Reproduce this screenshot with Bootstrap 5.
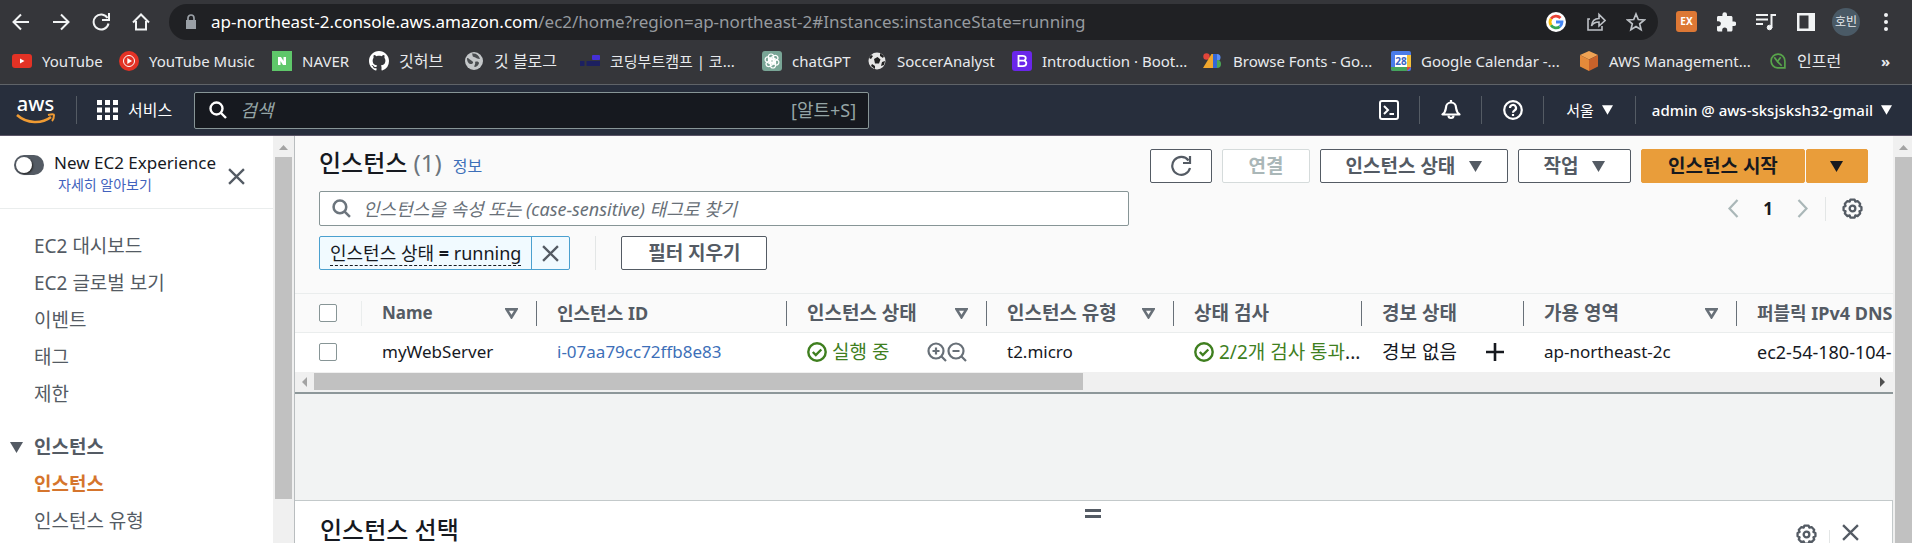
<!DOCTYPE html>
<html lang="ko">
<head>
<meta charset="utf-8">
<meta name="viewport" content="width=device-width, initial-scale=1">
<title>인스턴스 | EC2 관리 콘솔</title>
<link href="https://cdn.jsdelivr.net/npm/bootstrap@5.3.0/dist/css/bootstrap.min.css" rel="stylesheet">
<style>
  :root { --ink: #16191f; --slate: #545b64; --rule: #eaeded; --edge: #879596; --link: #3d6fb8; --ok: #3f7f1f; --aws: #e99d3a; }
  body { font-family: "Noto Sans", "Noto Sans CJK KR", sans-serif; font-size: 18px; line-height: 24px; color: var(--ink); background: #fff; }
  button { background: none; border: 0; padding: 0; color: inherit; }
  svg { display: block; flex: none; }
  a { text-decoration: none; color: var(--link); }
  .ko { font-size: 19px; }
  .en { font-size: 17px; }
  .dim { color: var(--slate); }

  /* browser chrome */
  .chrome { background: #35363a; color: #e8eaed; border-bottom: 1px solid #5f6368; }
  .toolbar { height: 43px; padding: 0 6px 0 1px; }
  .tool { width: 40px; height: 40px; display: flex; align-items: center; justify-content: center; flex: none; }
  .omnibox { background: #202124; border-radius: 18px; height: 36px; margin: 0 8px; padding: 0 12px 0 14px; }
  .omnibox .url { font-size: 17px; color: #fff; }
  .omnibox .url span { color: #969a9f; }
  .avatar { width: 28px; height: 28px; border-radius: 50%; background: #4a5a66; font-size: 12px; display: flex; align-items: center; justify-content: center; }
  .marks { display: grid; height: 41px; padding: 0 0 5px 12px; align-items: center; font-size: 15px;
    grid-template-columns: 107px 153px 97px 95px 116px 182px 106px 144px 191px 188px 188px 190px 1fr 31px; }
  .marks a { display: flex; align-items: center; gap: 10px; color: #e8eaed; white-space: nowrap; }
  .marks .hangul { font-size: 16px; }

  /* console header */
  .topnav { background: #272e3c; color: #fff; height: 51px; border-bottom: 1px solid #5b5567; font-size: 15px; }
  .topnav .vr { width: 1px; height: 28px; align-self: center; background: #545b64; opacity: 1; }
  .topnav .ico { width: 61px; display: flex; justify-content: center; }
  .logo { margin: 0 20px 0 16px; }
  .services { gap: 10px; margin: 0 22px 0 20px; font-size: 16px; }
  .region { padding: 0 22px; }
  .account { padding: 0 20px 0 16px; }
  .topsearch { flex: 0 1 675px; height: 37px; background: #16191f; border: 1px solid #879596; border-radius: 2px; color: #95a5a6; padding: 0 12px 0 14px; font-size: 18px; }
  .topsearch input { background: none; border: 0; outline: 0; font-style: italic; color: #fff; min-width: 0; margin-left: 13px; }
  .topsearch input::placeholder { color: #95a5a6; opacity: 1; }

  /* side navigation */
  .side { width: 273px; }
  .side-top { height: 73px; border-bottom: 1px solid var(--rule); padding: 15px 28px 0 14px; }
  .switcher { appearance: none; width: 30px; height: 20px; border-radius: 10px; background: #545b64; display: flex; margin: 4px 0 0; padding: 2px; }
  .switcher::before { content: ""; width: 16px; height: 16px; border-radius: 50%; background: #fff; box-shadow: 1px 1px 2px #222; }
  .exp { margin-left: 10px; font-size: 17px; }
  .more { font-size: 14px; line-height: 20px; color: #4262bd; margin-left: 4px; }
  .side-close { margin-top: 17px; }
  .side ul { padding: 19px 0 0 34px; margin: 0; line-height: 37px; font-size: 19px; }
  .side li, .side li a { color: var(--slate); }
  .side .group { gap: 11px; margin: 16px 0 0 -24px; }
  .side li a.now { color: #d5752d; }
  .vtrack { background: #f0f0f0; padding: 0 2px; width: 21px; }
  .vtrack svg { height: 21px; margin: 0 auto; }
  .vtrack .thumb { background: #c1c1c1; width: 100%; height: 84%; }
  .vtrack.page { width: 19px; padding-right: 0; }

  /* instance list */
  .main { border-left: 1px solid #b9bdbf; min-width: 0; background: #f2f3f3; }
  .list-head { background: #fafafa; padding: 13px 25px 23px 24px; }
  .title { font-size: 24px; line-height: 28px; font-weight: 500; margin: 0; }
  .info { font-size: 16px; line-height: 34px; margin-left: 11px; }
  .acts { gap: 10px; }
  .pair { gap: 1px; }
  .act { height: 34px; border: 1px solid var(--slate); border-radius: 2px; background: #fff; color: var(--slate); font-weight: 700; font-size: 19px; line-height: 24px; display: flex; align-items: center; justify-content: center; gap: 14px; white-space: nowrap; }
  .act:disabled { border-color: #d5dbdb; color: #aab7b8; }
  .act.go { background: var(--aws); border-color: var(--aws); color: var(--ink); }
  .filter { flex: 0 1 810px; height: 35px; border: 1px solid var(--edge); border-radius: 2px; background: #fff; }
  .filter input { border: 0; outline: 0; font-style: italic; min-width: 0; }
  .filter input::placeholder { color: #687078; opacity: 1; }
  .pager { gap: 24px; padding-right: 5px; }
  .pager .rule { margin: 0 -8px; }
  .filters { margin-top: 10px; }
  .filters > .rule { margin: 0 25px; }
  .token { height: 34px; border: 1px solid #4ba0cf; border-radius: 2px; background: #f1faff; }
  .token span { border-bottom: 1px dashed var(--ink); margin: 0 10px; }
  .token button { width: 38px; border-left: 1px solid #4ba0cf; align-self: stretch; display: flex; align-items: center; justify-content: center; }
  .rule { width: 1px; background: #e3e6e6; }
  .grid-wrap { overflow: hidden; background: #fff; }
  .inst { table-layout: fixed; width: 100%; min-width: 1598px; border-collapse: collapse; white-space: nowrap; }
  .inst th { background: #fafafa; border: solid var(--rule); border-width: 1px 0; height: 39px; padding: 0; color: var(--slate); font-weight: 700; }
  .inst th > div { height: 25px; padding: 0 18px 0 20px; border-right: 1px solid #687078; display: flex; align-items: center; justify-content: space-between; }
  .inst th:first-child > div { border-color: var(--rule); }
  .inst th:last-child > div { border: 0; padding-right: 0; }
  .inst td { height: 39px; padding: 0 0 0 20px; overflow: hidden; }
  .inst th:first-child > div, .inst td:first-child { padding-left: 24px; }
  .tick { appearance: none; width: 18px; height: 18px; border: 1px solid var(--edge); border-radius: 2px; background: #fff; margin: 0; display: block; }
  .good { color: var(--ok); gap: 5px; }
  .trail { margin: 0 20px 0 auto; }
  .htrack { height: 20px; background: #f0f0f0; padding: 2px 6px; display: flex; align-items: center; gap: 5px; }
  .htrack .thumb { height: 17px; width: 48.5%; background: #c1c1c1; }
  .list { border-bottom: 2px solid #8d9799; }
  .split { background: #fff; border: 1px solid #c3c9ca; border-width: 1px 1px 0 0; margin-top: 106px; padding-top: 8px; }
  .split-bar { gap: 12px; padding: 0 33px 0 25px; }
  .split-bar .title { line-height: 24px; }
  .split-bar button { margin-top: 6px; }
  .split-bar .rule { height: 28px; margin-top: 12px; }
  .grip { width: 16px; height: 9px; border: solid var(--slate); border-width: 3px 0; }
</style>
</head>
<body class="vh-100 overflow-hidden d-flex flex-column">

<svg width="0" height="0" class="position-absolute">
  <defs>
    <symbol id="lens" viewBox="0 0 18 18"><g fill="none" stroke="currentColor" stroke-width="2.4"><circle cx="7.5" cy="7.5" r="6"/><path d="M12 12l5 5"/></g></symbol>
    <symbol id="cross" viewBox="0 0 16 16"><path d="M1 1l14 14M15 1L1 15" stroke="currentColor" stroke-width="2.2"/></symbol>
    <symbol id="down" viewBox="0 0 13 11"><path d="M0 0h13L6.500 11z" fill="currentColor"/></symbol>
    <symbol id="sort" viewBox="0 0 12 10"><path d="M1.500 1.200h9L6 8.500z" fill="none" stroke="#687078" stroke-width="2.4"/></symbol>
    <symbol id="okay" viewBox="0 0 20 20"><g fill="none" stroke="currentColor" stroke-width="2.4"><circle cx="10" cy="10" r="8.700"/><path d="M5.800 10l3 3 5.500-5.500"/></g></symbol>
    <symbol id="gear" viewBox="0 0 20 20"><g fill="none" stroke="currentColor" stroke-width="2.2"><path stroke-linejoin="round" d="M8 1.500h4l.7 2 2.100-.600 2.500 2.600-.7 2.100 1.900 1v3l-1.900 1 .7 2.100-2.500 2.600-2.100-.7-.7 2H8l-.7-2-2.100.7-2.500-2.600.7-2.100-1.900-1v-3l1.900-1-.7-2.100 2.500-2.600 2.100.6z"/><circle cx="10" cy="10" r="2.700"/></g></symbol>
  </defs>
</svg>

<header class="chrome">
  <div class="toolbar d-flex align-items-center">
    <button class="tool" aria-label="뒤로"><svg width="18" height="18" fill="none" stroke="#f1f3f4" stroke-width="2"><path d="M17 9H2M9 1.500L1.500 9 9 16.500"/></svg></button>
    <button class="tool" aria-label="앞으로"><svg width="18" height="18" fill="none" stroke="#f1f3f4" stroke-width="2"><path d="M1 9h15M9 1.500L16.500 9 9 16.500"/></svg></button>
    <button class="tool" aria-label="새로고침"><svg width="18" height="18" fill="none" stroke="#f1f3f4" stroke-width="2"><path d="M15.500 5A7.500 7.500 0 1 0 16.500 10.500M17 0v7h-7"/></svg></button>
    <button class="tool" aria-label="홈"><svg width="18" height="18" fill="none" stroke="#f1f3f4" stroke-width="2"><path d="M1 9.500L9 1.500l8 8M4 8v8.500h10V8"/></svg></button>
    <div class="omnibox d-flex align-items-center flex-grow-1">
      <svg width="16" height="16"><path d="M3 6h10v9H3z" fill="#9aa0a6"/><path d="M5 6.500V4a3 3 0 0 1 6 0v2.500" fill="none" stroke="#9aa0a6" stroke-width="1.700"/></svg>
      <div class="url ms-2 ps-1 me-auto text-nowrap">ap-northeast-2.console.aws.amazon.com<span>/ec2/home?region=ap-northeast-2#Instances:instanceState=running</span></div>
      <div class="d-flex align-items-center gap-3">
        <button class="me-1" aria-label="Google"><svg width="20" height="20"><circle cx="10" cy="10" r="10" fill="#fff"/><g fill="none" stroke-width="2.800"><path d="M14.500 6A6 6 0 0 0 5 6.800" stroke="#ea4335"/><path d="M5 6.800a6 6 0 0 0 0 6.400" stroke="#fbbc05"/><path d="M5 13.200a6 6 0 0 0 8.800 1.400" stroke="#34a853"/><path d="M13.800 14.600A6 6 0 0 0 16 10h-6" stroke="#4285f4"/></g></svg></button>
        <button class="me-1" aria-label="공유"><svg width="20" height="20" fill="none" stroke="#bdc1c6" stroke-width="1.600"><path d="M4 7H2v11h14v-4M5.500 14c.5-5 3-7.500 7.500-7.500V2.500L19 8.500l-6 5.500v-4c-4 0-6 1-7.500 4z"/></svg></button>
        <button aria-label="북마크"><svg width="20" height="20" fill="none" stroke="#bdc1c6" stroke-width="1.700"><path d="M10 2l2.300 5.500 6 .5-4.600 3.900 1.400 5.900-5.100-3.200-5.100 3.200 1.400-5.900L1.700 8l6-.5z"/></svg></button>
      </div>
    </div>
    <button class="tool" aria-label="확장 EX"><svg width="21" height="21"><rect width="21" height="21" rx="3" fill="#dd7835"/><text x="10.500" y="14" font-size="10" font-weight="700" fill="#fff" text-anchor="middle">EX</text></svg></button>
    <button class="tool" aria-label="확장 프로그램"><svg width="20" height="20" fill="#f1f3f4"><path d="M18 9.500h-1.500v-4c0-.8-.7-1.500-1.500-1.500h-4V2.500a2.300 2.300 0 0 0-4.600 0V4h-4C1.600 4 1 4.700 1 5.500v3.700h1.400a2.500 2.500 0 0 1 0 5H1V18c0 .8.7 1.500 1.500 1.500h3.700v-1.400a2.500 2.500 0 0 1 5 0v1.400H15c.8 0 1.500-.7 1.500-1.500v-4H18a2.200 2.200 0 0 0 0-4.500z"/></svg></button>
    <button class="tool" aria-label="미디어"><svg width="20" height="18" fill="none" stroke="#f1f3f4" stroke-width="2"><path d="M0 2h12M0 6.500h12M0 11h7M15.500 15V2H20"/><circle cx="13.500" cy="14.500" r="2.300" fill="#f1f3f4" stroke-width="1"/></svg></button>
    <button class="tool" aria-label="측면 패널"><svg width="18" height="18"><path d="M0 0h18v18H0zM2.500 2.500v13h9v-13z" fill="#f1f3f4" fill-rule="evenodd"/></svg></button>
    <button class="tool" aria-label="프로필"><span class="avatar">호빈</span></button>
    <button class="tool" aria-label="메뉴"><svg width="4" height="18" fill="#f1f3f4"><circle cx="2" cy="2" r="2"/><circle cx="2" cy="9" r="2"/><circle cx="2" cy="16" r="2"/></svg></button>
  </div>
  <nav class="marks">
    <a href="#"><svg width="20" height="20"><rect y="3" width="20" height="14" rx="3" fill="#e33225"/><path d="M8 7.500v5l4.500-2.500z" fill="#fff"/></svg>YouTube</a>
    <a href="#"><svg width="20" height="20"><circle cx="10" cy="10" r="10" fill="#e33225"/><circle cx="10" cy="10" r="5.500" fill="none" stroke="#fff"/><path d="M8.300 7v6l4.700-3z" fill="#fff"/></svg>YouTube Music</a>
    <a href="#"><svg width="20" height="20"><rect width="20" height="20" fill="#5fc76a"/><path d="M6 6h3l2.500 4V6H14v8h-3l-2.500-4v4H6z" fill="#fff"/></svg>NAVER</a>
    <a href="#" class="hangul"><svg width="20" height="20" viewBox="0 0 16 16" fill="#fff"><path d="M8 0C3.580 0 0 3.580 0 8c0 3.540 2.290 6.530 5.470 7.590.4.070.55-.17.55-.38 0-.19-.01-.82-.01-1.490-2.010.37-2.530-.49-2.690-.94-.09-.23-.48-.94-.82-1.130-.28-.15-.68-.52-.01-.53.63-.01 1.080.58 1.230.82.72 1.210 1.870.87 2.330.66.07-.52.28-.87.51-1.070-1.780-.2-3.640-.89-3.640-3.950 0-.87.31-1.590.82-2.150-.08-.2-.36-1.020.08-2.120 0 0 .67-.21 2.200.82.64-.18 1.320-.27 2-.27s1.360.09 2 .27c1.530-1.040 2.200-.82 2.200-.82.44 1.100.16 1.920.08 2.120.51.56.82 1.270.82 2.150 0 3.070-1.870 3.750-3.650 3.950.29.25.54.73.54 1.480 0 1.070-.01 1.930-.01 2.200 0 .21.15.46.55.38A8.010 8.010 0 0 0 16 8c0-4.420-3.580-8-8-8z"/></svg>깃허브</a>
    <a href="#" class="hangul"><svg width="20" height="20"><circle cx="10" cy="10" r="9" fill="#c4c7c9"/><path d="M3 7c2 0 3 2 5 3s1 3-1 3-4-2-4-6zM8 2.500c1 2 0 3 2 3.500s3 2 6 2c-1-4-4-6-8-5.500zM11 11c2-1 4 0 4 1s-2 4-4 4 1-3 0-5z" fill="#4a4d50"/></svg>깃 블로그</a>
    <a href="#"><svg width="20" height="20"><rect x="12" y="4" width="8" height="5" rx="1" fill="#4530d8"/><path d="M0 10h4.500v5H0zM6.500 10H20v5H6.500z" fill="#1c2060"/></svg>코딩부트캠프 | 코...</a>
    <a href="#"><svg width="20" height="20"><rect width="20" height="20" rx="3" fill="#79a596"/><g fill="none" stroke="#fff" stroke-width="1.200"><rect x="6.500" y="3" width="5" height="9" rx="2.500"/><rect x="6.500" y="3" width="5" height="9" rx="2.500" transform="rotate(60 10 10)"/><rect x="6.500" y="3" width="5" height="9" rx="2.500" transform="rotate(120 10 10)"/><rect x="6.500" y="3" width="5" height="9" rx="2.500" transform="rotate(180 10 10)"/><rect x="6.500" y="3" width="5" height="9" rx="2.500" transform="rotate(240 10 10)"/><rect x="6.500" y="3" width="5" height="9" rx="2.500" transform="rotate(300 10 10)"/></g></svg>chatGPT</a>
    <a href="#"><svg width="19" height="20"><circle cx="9" cy="10" r="8.500" fill="#e6e6e6"/><path d="M6 8l3.500-2 3 2.500-1.500 4H7zM1 7l2-3 2 1-2 3zM12 2l4 3-1 2-3-2zM14 11l3-1-1 4-3 1zM4 13l3 2v3l-4-3z" fill="#222"/></svg>SoccerAnalyst</a>
    <a href="#"><svg width="20" height="20"><rect width="20" height="20" rx="3" fill="#6a26ea"/><path d="M6.500 4.800h4.200c3.800 0 3.800 4 1.200 4.800 3.500.8 3.200 5.600-1 5.600H6.500zM6.500 9.700H11" fill="none" stroke="#fff" stroke-width="1.800"/></svg>Introduction · Boot...</a>
    <a href="#"><svg width="20" height="20"><circle cx="3.500" cy="5.500" r="3.200" fill="#e2453a"/><path d="M8.500 3H13v14H0z" fill="#f0a72d"/><path d="M10 3h4v14h-4z" fill="#3367d6"/><path d="M14 3a3.500 3.500 0 0 1 0 7z" fill="#5b8df5"/><path d="M14 9a4 4 0 0 1 0 8z" fill="#4ba657"/></svg>Browse Fonts - Go...</a>
    <a href="#"><svg width="20" height="20"><rect width="20" height="20" rx="2" fill="#4a7cea"/><path d="M16 4h4v12h-4z" fill="#f4c13a"/><path d="M0 16h16v4H2a2 2 0 0 1-2-2z" fill="#46a45c"/><path d="M16 16h4l-4 4z" fill="#dc4839"/><path d="M4 4h12v12H4z" fill="#fff"/><text x="10" y="14" font-size="10" font-weight="700" fill="#3c66c4" text-anchor="middle">28</text></svg>Google Calendar -...</a>
    <a href="#"><svg width="20" height="20"><path d="M10 0l9 4-9 4.500L1 4z" fill="#f0a354"/><path d="M1 4l9 4.500V20l-9-4.500z" fill="#e58a3a"/><path d="M19 4l-9 4.500V20l9-4.500z" fill="#c9622a"/></svg>AWS Management...</a>
    <a href="#" class="hangul"><svg width="18" height="18" viewBox="2 2 17 17" fill="none" stroke="#58a44b" stroke-width="1.600"><path d="M17 17H10a6.500 6.500 0 1 1 7-6.500zM7 7l3 4 3-4M10 11l4 4"/></svg>인프런</a>
    <button class="text-start fw-bold" aria-label="북마크 더보기">»</button>
  </nav>
</header>

<header class="topnav d-flex align-items-center flex-shrink-0">
  <a href="#" class="logo" aria-label="aws"><svg width="40" height="34" viewBox="0 -6 40 34"><text x="19.500" y="12" font-family="Noto Sans" font-size="20" font-weight="500" fill="#fff" text-anchor="middle">aws</text><path d="M1 16c10 9 25 9 34 2" fill="none" stroke="#f09b33" stroke-width="2.600"/><path d="M32 16c4-1 6-1 6 0s0 4-2 6" fill="none" stroke="#f09b33" stroke-width="2"/></svg></a>
  <div class="vr"></div>
  <button class="services d-flex align-items-center text-nowrap">
    <svg width="21" height="20" fill="#fff"><path d="M0 0h5v5H0zM8 0h5v5H8zM16 0h5v5h-5zM0 7.500h5v5H0zM8 7.500h5v5H8zM16 7.500h5v5h-5zM0 15h5v5H0zM8 15h5v5H8zM16 15h5v5h-5z"/></svg>서비스</button>
  <div class="topsearch d-flex align-items-center me-auto">
    <svg width="18" height="18" class="text-white"><use href="#lens"/></svg>
    <input class="flex-grow-1 p-0" type="search" placeholder="검색" aria-label="검색">
    <span>[알트+S]</span>
  </div>
  <button class="ico" aria-label="CloudShell"><svg width="20" height="20" fill="none" stroke="#fff" stroke-width="2"><rect x="1" y="1" width="18" height="18" rx="2"/><path d="M5 6l4 4-4 4M10.500 14H15"/></svg></button>
  <div class="vr"></div>
  <button class="ico" aria-label="알림"><svg width="20" height="20" fill="none" stroke="#fff" stroke-width="2.200"><path d="M1.500 14.500h17c-3-2-3-4-3.500-7a5 5 0 0 0-10 0c-.5 3-.5 5-3.500 7z" stroke-linejoin="round"/><path d="M10 0v2M7.500 15.500a2.500 2.500 0 0 0 5 0"/></svg></button>
  <div class="vr"></div>
  <button class="ico" aria-label="도움말"><svg width="20" height="20" fill="none" stroke="#fff" stroke-width="2.200"><circle cx="10" cy="10" r="8.800"/><path d="M7 8a3 3 0 1 1 4.500 2.500c-1.200.7-1.500 1-1.500 2.200M10 14v2"/></svg></button>
  <div class="vr"></div>
  <button class="region d-flex align-items-center gap-2 text-nowrap">서울<svg width="11" height="10"><use href="#down"/></svg></button>
  <div class="vr"></div>
  <button class="account d-flex align-items-center gap-2 text-nowrap fw-medium">admin @ aws-sksjsksh32-gmail<svg width="11" height="10"><use href="#down"/></svg></button>
</header>

<div class="d-flex flex-grow-1 overflow-hidden">
  <aside class="side flex-shrink-0">
    <div class="side-top d-flex">
      <input class="switcher flex-shrink-0" type="checkbox" role="switch" id="newexp">
      <div class="exp flex-grow-1 text-nowrap"><label for="newexp" class="d-block">New EC2 Experience</label><a href="#" class="more d-block">자세히 알아보기</a></div>
      <button class="side-close dim align-self-start" aria-label="닫기"><svg width="17" height="17"><use href="#cross"/></svg></button>
    </div>
    <ul class="list-unstyled">
      <li><a href="#">EC2 대시보드</a></li>
      <li><a href="#">EC2 글로벌 보기</a></li>
      <li><a href="#">이벤트</a></li>
      <li><a href="#">태그</a></li>
      <li><a href="#">제한</a></li>
      <li class="group d-flex align-items-center fw-bold"><svg width="13" height="11"><use href="#down"/></svg>인스턴스</li>
      <li><a href="#" class="fw-bold now">인스턴스</a></li>
      <li><a href="#">인스턴스 유형</a></li>
    </ul>
  </aside>
  <div class="vtrack flex-shrink-0"><svg width="9"><path d="M0 14h9L4.500 9z" fill="#a3a3a3"/></svg><div class="thumb"></div></div>

  <main class="main flex-grow-1 d-flex flex-column">
    <section class="list flex-shrink-0">
      <div class="list-head">
        <div class="d-flex">
          <h1 class="title">인스턴스 <span class="text-secondary fw-normal">(1)</span></h1>
          <a href="#" class="info">정보</a>
          <div class="d-flex ms-auto acts">
            <button class="act" style="width:62px" aria-label="새로고침"><svg width="22" height="22" fill="none" stroke="currentColor" stroke-width="2.200"><path d="M18.500 5.500A9 9 0 1 0 20 13M20 1v7h-7"/></svg></button>
            <button class="act" style="width:88px" disabled>연결</button>
            <button class="act" style="width:188px">인스턴스 상태<svg width="13" height="11"><use href="#down"/></svg></button>
            <button class="act" style="width:113px">작업<svg width="13" height="11"><use href="#down"/></svg></button>
            <div class="d-flex pair"><button class="act go" style="width:164px">인스턴스 시작</button><button class="act go" style="width:62px" aria-label="더보기"><svg width="13" height="11"><use href="#down"/></svg></button></div>
          </div>
        </div>
        <div class="d-flex align-items-center mt-2">
          <div class="filter d-flex align-items-center px-2">
            <svg width="19" height="19" class="text-secondary ms-1"><use href="#lens"/></svg>
            <input class="flex-grow-1 ms-2 ps-1 p-0" type="search" placeholder="인스턴스을 속성 또는 (case-sensitive) 태그로 찾기" aria-label="인스턴스 찾기">
          </div>
          <nav class="d-flex align-items-center ms-auto pager" aria-label="페이지">
            <button aria-label="이전"><svg width="12" height="19" fill="none" stroke="#aab7b8" stroke-width="2.200"><path d="M10.500 1l-8 8.500 8 8.500"/></svg></button>
            <span class="fw-bold en">1</span>
            <button aria-label="다음"><svg width="12" height="19" fill="none" stroke="#aab7b8" stroke-width="2.200"><path d="M1.500 1l8 8.500-8 8.500"/></svg></button>
            <div class="rule align-self-stretch"></div>
            <button class="dim" aria-label="설정"><svg width="21" height="21"><use href="#gear"/></svg></button>
          </nav>
        </div>
        <div class="d-flex filters">
          <div class="token d-flex align-items-center"><span>인스턴스 상태 <b class="fw-bold">=</b> running</span><button class="dim" aria-label="필터 제거"><svg width="17" height="17"><use href="#cross"/></svg></button></div>
          <div class="rule"></div>
          <button class="act" style="width:146px">필터 지우기</button>
        </div>
      </div>
      <div class="grid-wrap">
        <table class="inst">
          <colgroup><col style="width:67px"><col style="width:175px"><col style="width:250px"><col style="width:200px"><col style="width:187px"><col style="width:188px"><col style="width:162px"><col style="width:213px"><col></colgroup>
          <thead><tr>
            <th><div><input type="checkbox" class="tick" aria-label="모두 선택"></div></th>
            <th class="en"><div>Name<svg width="13" height="11"><use href="#sort"/></svg></div></th>
            <th><div>인스턴스 ID</div></th>
            <th class="ko"><div>인스턴스 상태<svg width="13" height="11"><use href="#sort"/></svg></div></th>
            <th class="ko"><div>인스턴스 유형<svg width="13" height="11"><use href="#sort"/></svg></div></th>
            <th class="ko"><div>상태 검사</div></th>
            <th class="ko"><div>경보 상태</div></th>
            <th class="ko"><div>가용 영역<svg width="13" height="11"><use href="#sort"/></svg></div></th>
            <th><div>퍼블릭 IPv4 DNS</div></th>
          </tr></thead>
          <tbody><tr>
            <td><input type="checkbox" class="tick" aria-label="myWebServer 선택"></td>
            <td class="en">myWebServer</td>
            <td class="en"><a href="#">i-07aa79cc72ffb8e83</a></td>
            <td class="ko"><div class="d-flex align-items-center good"><svg width="20" height="20"><use href="#okay"/></svg><span>실행 중</span>
              <svg class="trail" width="40" height="20" fill="none" stroke="#687078" stroke-width="2.200"><circle cx="9" cy="9" r="7.500"/><path d="M14 14l5 5M9 5.500v7M5.500 9h7"/><circle cx="29" cy="9" r="7.500"/><path d="M34 14l5 5M25.500 9h7"/></svg></div></td>
            <td class="en">t2.micro</td>
            <td class="ko"><div class="d-flex align-items-center good"><svg width="20" height="20"><use href="#okay"/></svg><span>2/2개 검사 통과<span class="text-dark">...</span></span></div></td>
            <td class="ko"><div class="d-flex align-items-center">경보 없음<button class="trail" aria-label="경보 추가"><svg width="18" height="18" stroke="#16191f" stroke-width="2.600"><path d="M9 0v18M0 9h18"/></svg></button></div></td>
            <td class="en">ap-northeast-2c</td>
            <td>ec2-54-180-104-</td>
          </tr></tbody>
        </table>
      </div>
      <div class="htrack"><svg width="8" height="10"><path d="M6 0v10L1 5z" fill="#a3a3a3"/></svg><div class="thumb"></div><svg class="ms-auto" width="8" height="10"><path d="M1 0v10l5-5z" fill="#505050"/></svg></div>
    </section>
    <section class="split flex-grow-1">
      <div class="grip mx-auto"></div>
      <div class="d-flex align-items-start split-bar">
        <h2 class="title me-auto">인스턴스 선택</h2>
        <button class="dim" aria-label="환경설정"><svg width="21" height="21"><use href="#gear"/></svg></button>
        <div class="rule"></div>
        <button class="dim" aria-label="닫기"><svg width="17" height="17"><use href="#cross"/></svg></button>
      </div>
    </section>
  </main>
  <div class="vtrack page flex-shrink-0 d-flex flex-column"><svg width="9"><path d="M0 14h9L4.500 9z" fill="#a3a3a3"/></svg><div class="thumb flex-grow-1"></div></div>
</div>
<script src="https://cdn.jsdelivr.net/npm/bootstrap@5.3.0/dist/js/bootstrap.bundle.min.js"></script>
</body>
</html>
